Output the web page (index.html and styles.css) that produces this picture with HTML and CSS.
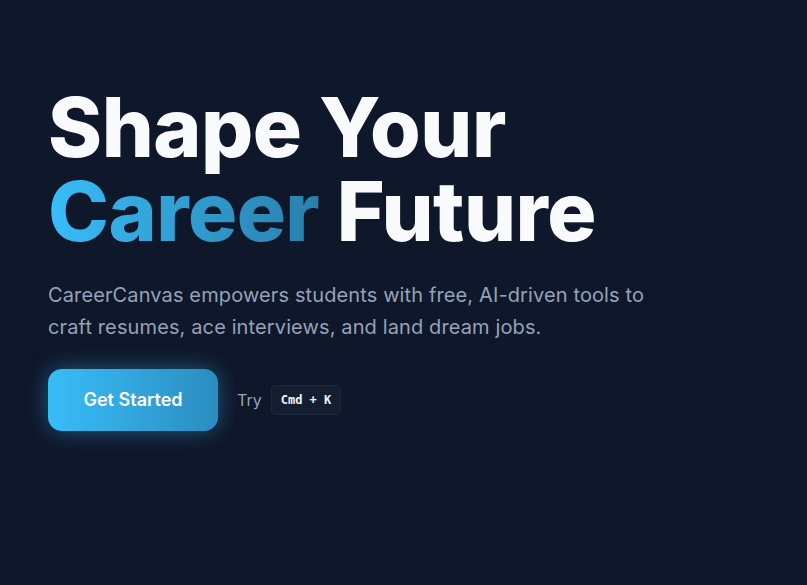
FILE: index.html
```html
<!DOCTYPE html>
<html lang="en">
<head>
    <meta charset="UTF-8">
    <meta name="viewport" content="width=device-width, initial-scale=1.0">
    <title>CareerCanvas</title>
    <link rel="stylesheet" href="styles.css">
</head>
<body>
<main class="hero">
    <h1 class="hero-title">Shape Your<br><span class="accent">Career</span> Future</h1>
    <p class="hero-text">CareerCanvas empowers students with free, AI-driven tools to craft resumes, ace interviews, and land dream jobs.</p>
    <div class="hero-actions">
        <a href="#" class="btn-primary">Get Started</a>
        <span class="hint">Try</span>
        <kbd class="shortcut">Cmd + K</kbd>
    </div>
</main>
</body>
</html>
```

FILE: styles.css
```css
html, body {
    margin: 0;
    height: 100%;
}
body {
    font-family: Inter, "Noto Sans", sans-serif;
    background-color: #0f172a;
    color: #f8fafc;
}
.hero {
    padding: 86px 48px 0;
}
.hero-title {
    margin: 0;
    font-size: 82px;
    font-weight: 800;
    line-height: 84px;
    letter-spacing: -0.5px;
    color: #f8fafc;
}
.accent {
    background: linear-gradient(to right, #38bdf8, #2a7fab);
    -webkit-background-clip: text;
    background-clip: text;
    color: transparent;
}
.hero-text {
    max-width: 620px;
    margin: 25px 0 0;
    font-size: 20px;
    line-height: 32px;
    letter-spacing: 0.12px;
    color: #94a3b8;
}
.hero-actions {
    display: flex;
    align-items: center;
    margin-top: 26px;
}
.btn-primary {
    display: inline-block;
    width: 170px;
    height: 62px;
    line-height: 62px;
    text-align: center;
    border-radius: 14px;
    background: linear-gradient(to right, #38bdf8, #2b8dc0);
    box-shadow: 0 0 22px rgba(56, 189, 248, 0.4);
    color: #fff;
    font-size: 18px;
    font-weight: 600;
    text-decoration: none;
}
.hint {
    margin-left: 19px;
    font-size: 16px;
    color: #94a3b8;
}
.shortcut {
    margin-left: 9px;
    padding: 0 9px;
    height: 28px;
    line-height: 28px;
    border: 1px solid #1e293b;
    border-radius: 5px;
    background-color: #151e30;
    font-family: "DejaVu Sans Mono", monospace;
    font-size: 12px;
    font-weight: 700;
    color: #f1f5f9;
}
```
